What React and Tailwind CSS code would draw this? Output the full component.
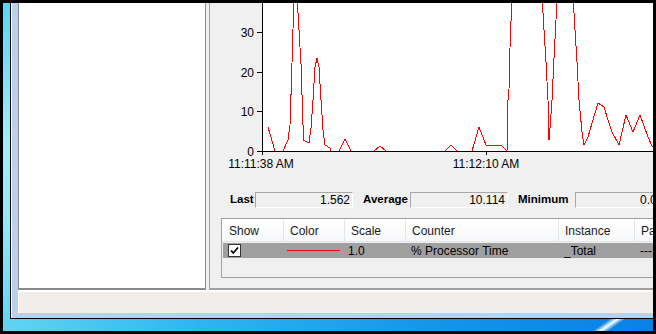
import React from 'react';

const ui = { fontFamily: '"Liberation Sans", Arial, sans-serif' };

const points = [
  [268, 127], [275, 151], [283, 151], [288, 140], [290, 125], [291, 95], [292, 63], [294, -5], [297, -5],
  [299, 30], [301, 64], [303, 125], [303, 140], [309, 143], [311, 128], [313, 100], [315, 67], [317, 58],
  [319, 67], [321, 100], [323, 130], [325, 145], [330, 148], [331, 151], [339, 151], [345, 139], [351, 151],
  [374, 151], [380, 146], [386, 151], [445, 151], [451, 145], [457, 151], [472, 151], [479, 127], [486, 145],
  [501, 145], [507, 151], [508, 100], [509, 89], [510, 48], [512, -5], [542, -5], [544, 30], [546, 62],
  [548, 100], [549, 140], [550, 128], [552, 100], [554, 58], [556, 20], [557, -5], [573, -5], [575, 30],
  [577, 62], [579, 100], [582, 132], [584, 145], [588, 137], [592, 123], [598, 103], [604, 107], [608, 120],
  [612, 132], [619, 145], [626, 115], [633, 132], [640, 115], [648, 137], [652, 146], [660, 150],
];

function Chart() {
  const yTicks = [
    { v: '30', y: 32 },
    { v: '20', y: 72 },
    { v: '10', y: 111 },
    { v: '0', y: 151 },
  ];
  return (
    <svg width="443" height="169" viewBox="210 3 443 169" className="block shrink-0">
      <rect x="262" y="3" width="400" height="148" fill="#ffffff" />
      <polyline
        points={points.map((p) => p.join(',')).join(' ')}
        fill="none"
        stroke="#ff0000"
        strokeWidth="1"
        shapeRendering="crispEdges"
      />
      <line x1="262.5" y1="3" x2="262.5" y2="155" stroke="#000" strokeWidth="1" />
      <line x1="257" y1="151.5" x2="660" y2="151.5" stroke="#000" strokeWidth="1" />
      <line x1="486.5" y1="151" x2="486.5" y2="155" stroke="#000" strokeWidth="1" />
      {yTicks.map((t) => (
        <g key={t.v}>
          <line x1="257" y1={t.y + 0.5} x2="262" y2={t.y + 0.5} stroke="#000" strokeWidth="1" />
          <text x="254" y={t.y + 4.5} fontSize="12" textAnchor="end" fill="#000" style={ui}>
            {t.v}
          </text>
        </g>
      ))}
      <text x="261" y="168" fontSize="12" textAnchor="middle" fill="#000" style={ui}>
        11:11:38 AM
      </text>
      <text x="486" y="168" fontSize="12" textAnchor="middle" fill="#000" style={ui}>
        11:12:10 AM
      </text>
    </svg>
  );
}

function StatBox({ value, width }) {
  return (
    <div
      className="h-[16px] flex items-center justify-end pr-[2px] bg-[#f0f0f0] border border-t-[#a8a8a8] border-l-[#a8a8a8] border-b-white border-r-white text-[12px] text-black shrink-0"
      style={{ width }}
    >
      {value}
    </div>
  );
}

function Stats() {
  return (
    <div className="flex items-center mt-[20px] h-[16px] pl-[20px] whitespace-nowrap" style={ui}>
      <span className="text-[11.5px] font-bold text-black w-[25px] shrink-0">Last</span>
      <StatBox value="1.562" width={98} />
      <span className="text-[11.5px] font-bold text-black ml-[10px] w-[47px] shrink-0">Average</span>
      <StatBox value="10.114" width={98} />
      <span className="text-[11.5px] font-bold text-black ml-[10px] w-[57px] shrink-0">Minimum</span>
      <StatBox value="0.000" width={98} />
    </div>
  );
}

function Check() {
  return (
    <div className="w-[13px] h-[13px] bg-white border border-[#333] flex items-center justify-center">
      <svg width="9" height="9" viewBox="0 0 9 9">
        <path d="M1 4.5 L3.3 7 L8 1.5" fill="none" stroke="#000" strokeWidth="1.8" />
      </svg>
    </div>
  );
}

function CounterList() {
  const cols = [
    { label: 'Show', w: 61 },
    { label: 'Color', w: 61 },
    { label: 'Scale', w: 61 },
    { label: 'Counter', w: 153 },
    { label: 'Instance', w: 76 },
    { label: 'Parent', w: 80 },
  ];
  return (
    <div
      className="ml-[11px] mt-[10px] h-[60px] w-[520px] border border-[#a0a0a0] bg-[#f0f0f0] shrink-0"
      style={ui}
    >
      <div className="flex h-[23px] bg-[linear-gradient(180deg,#ffffff,#f7f8fa)] border-b border-[#e3e6ea]">
        {cols.map((c, i) => (
          <div
            key={c.label}
            className={
              'flex items-center pt-[2px] text-[12px] text-[#1a1a1a] shrink-0 ' +
              (i === 0 ? 'pl-[7px]' : 'pl-[6px] border-l border-[#e3e6ea]')
            }
            style={{ width: c.w }}
          >
            {c.label}
          </div>
        ))}
      </div>
      <div className="flex h-[15px] mt-[1px] ml-[1px] bg-[#a0a0a0] items-center text-[12px] text-black">
        <div className="w-[60px] pl-[5px] shrink-0 flex items-center">
          <Check />
        </div>
        <div className="w-[61px] shrink-0 pl-[4px] flex items-center">
          <div className="w-[53px] h-px bg-[#ff0000]" />
        </div>
        <div className="w-[61px] shrink-0 pl-[4px]">1.0</div>
        <div className="w-[153px] shrink-0 pl-[6px]">% Processor Time</div>
        <div className="w-[76px] shrink-0 pl-[6px]">_Total</div>
        <div className="w-[80px] shrink-0 pl-[6px]">---</div>
      </div>
    </div>
  );
}

export default function App() {
  return (
    <div className="w-[656px] h-[334px] bg-black p-[3px] overflow-hidden">
      <div className="w-full h-full flex flex-col">
        <div className="flex flex-1 min-h-0">
          <div className="w-[7px] shrink-0 bg-[linear-gradient(180deg,#58d3f4,#a4eefb_45%,#90e8f9_70%,#62d6f4)]" />
          <div className="flex-1 min-w-0 border-l border-b border-black">
            <div className="h-full border-l border-white bg-[#b9d1ea] pl-[6px] pb-[5px]">
              <div className="h-full flex flex-col bg-[#f0f0f0]">
                <div className="flex h-[288px] shrink-0 border-b border-white">
                  <div className="w-[188px] shrink-0 bg-white border-l border-r border-b-2 border-[#8a8a8a]" />
                  <div className="w-[3px] shrink-0 bg-[#f0f0f0]" />
                  <div className="flex-1 min-w-0 flex flex-col border-l border-b-2 border-[#a0a0a0] overflow-hidden">
                    <Chart />
                    <Stats />
                    <CounterList />
                  </div>
                </div>
                <div className="flex-1 bg-[#f0edeb] border-t border-l border-white" />
              </div>
            </div>
          </div>
        </div>
        <div className="relative h-[12px] shrink-0 overflow-hidden bg-[linear-gradient(90deg,#62d4f3,#2cb6f1_30%,#1596ea_65%,#0a80e6)]">
          <div className="absolute left-[598px] top-[-2px] w-[16px] h-[16px] -skew-x-[55deg] bg-[linear-gradient(90deg,rgba(255,255,255,0),#ffffff_50%,rgba(255,255,255,0))]" />
        </div>
      </div>
    </div>
  );
}
